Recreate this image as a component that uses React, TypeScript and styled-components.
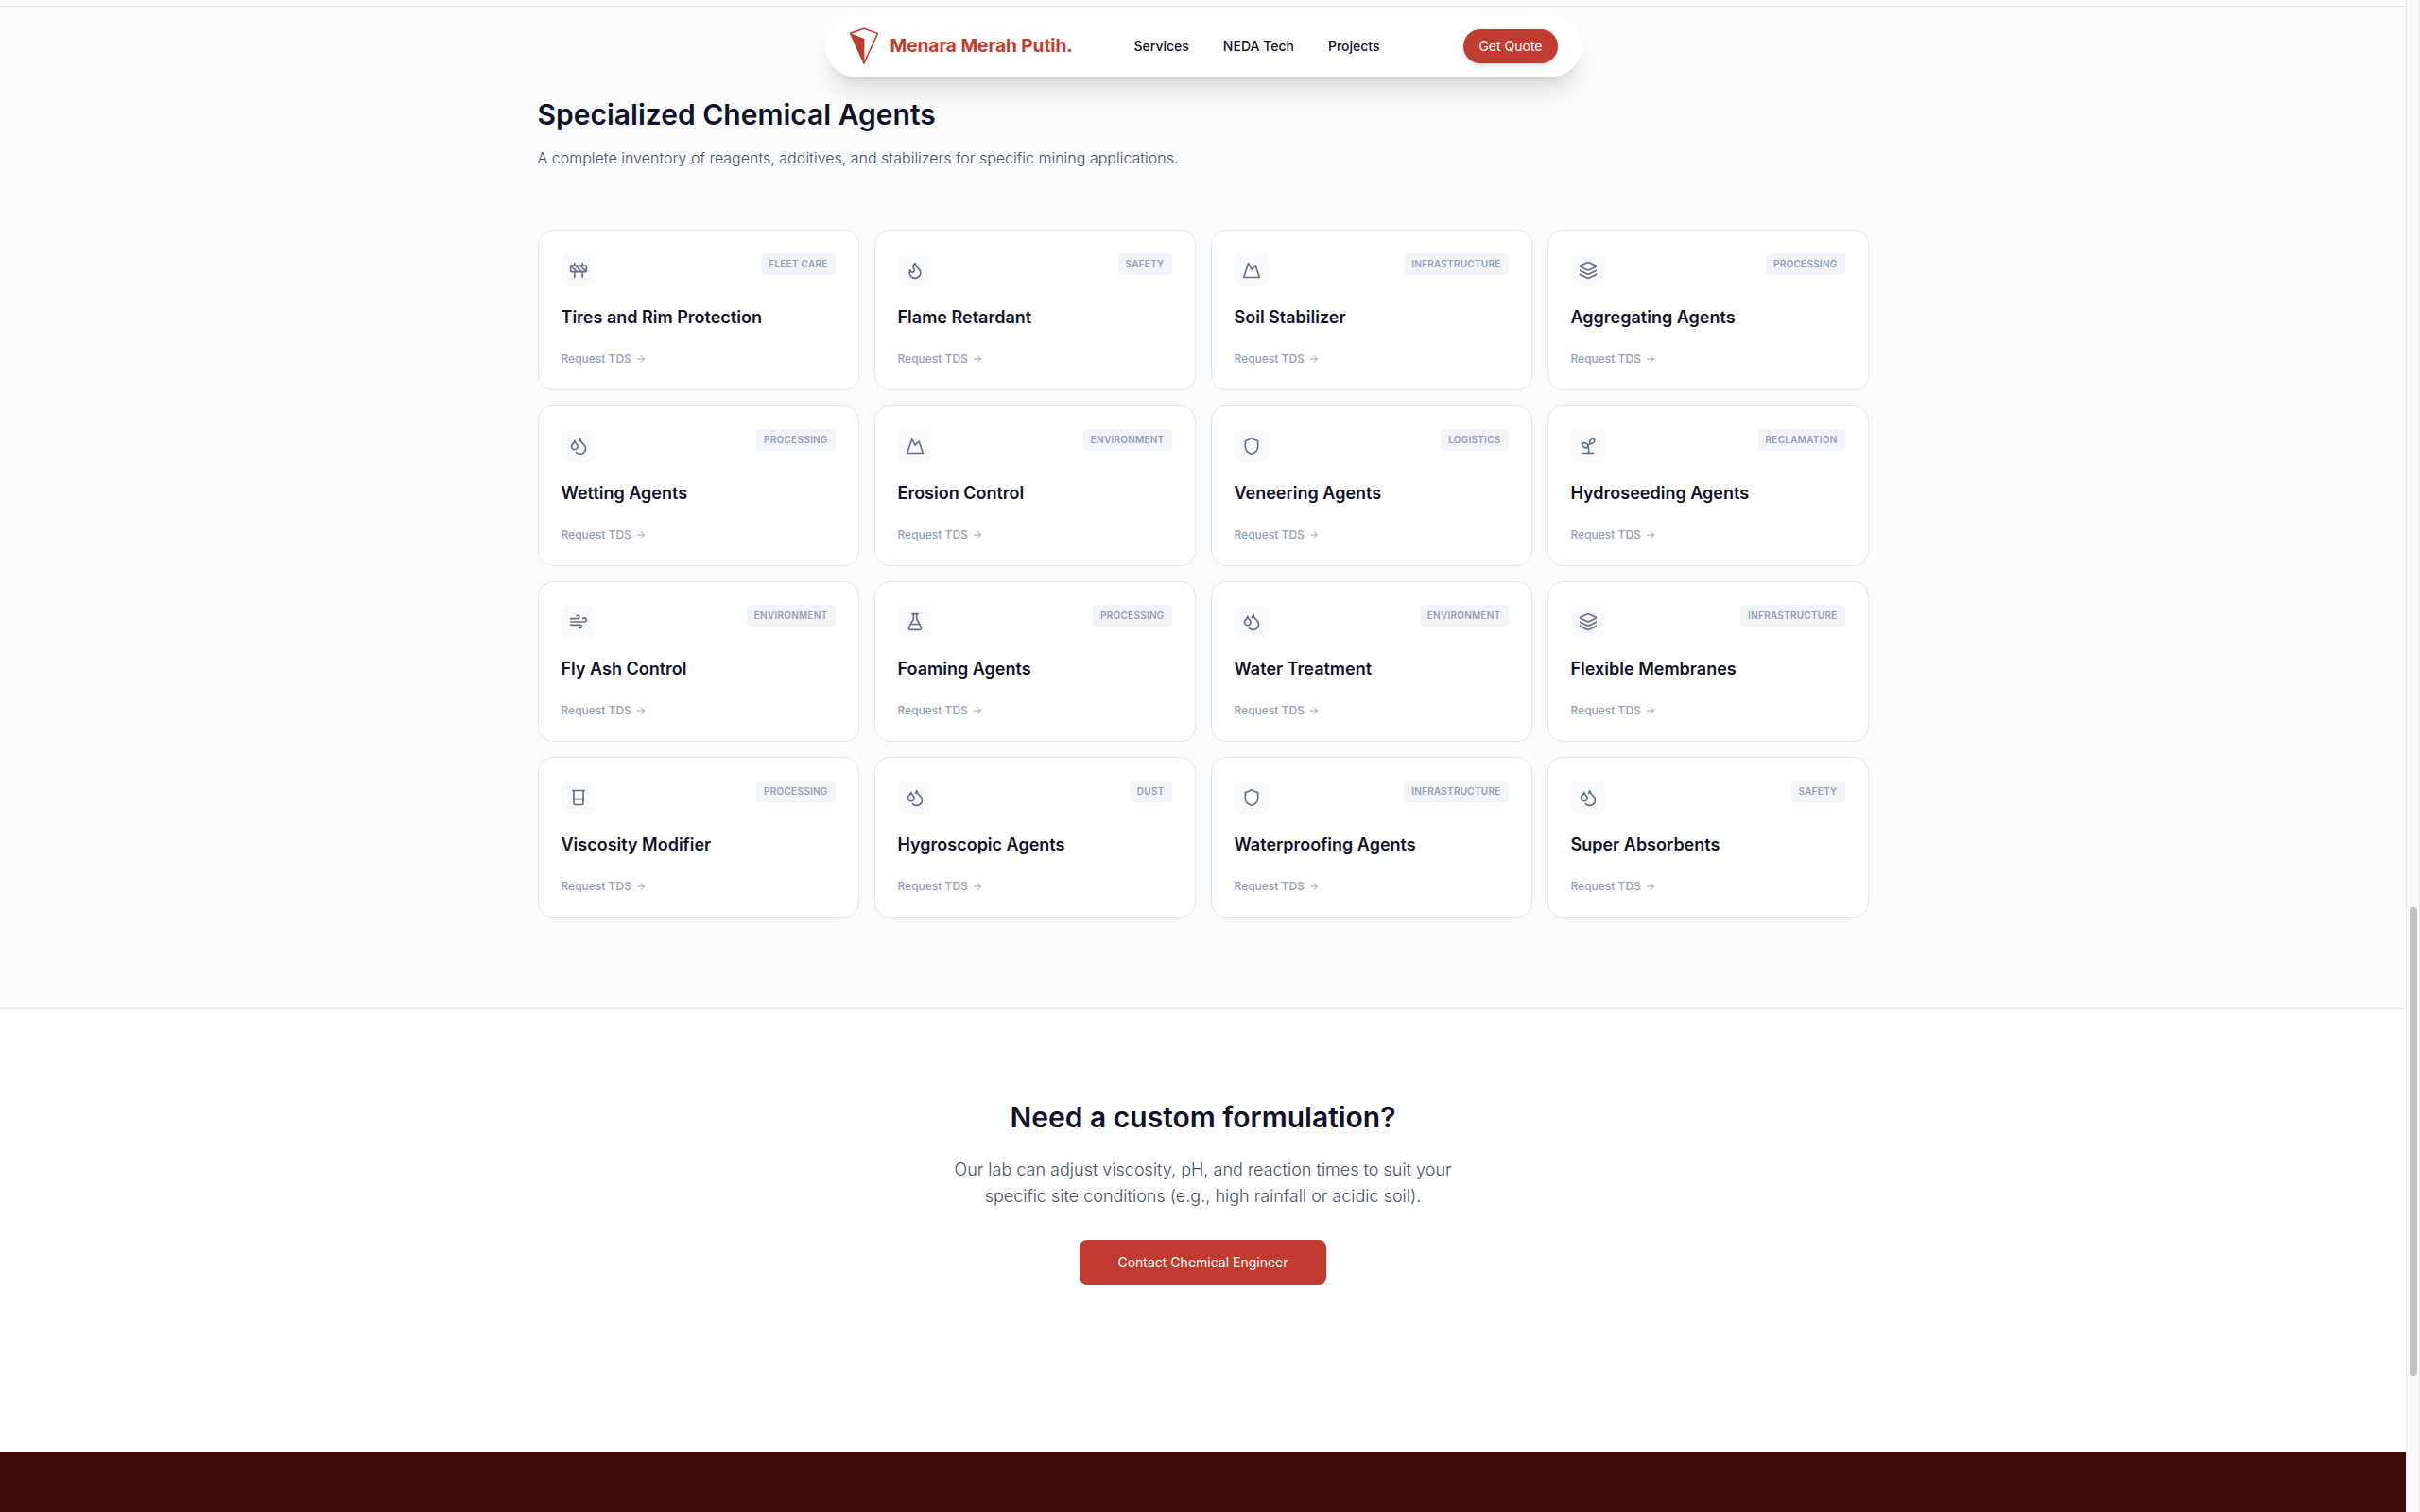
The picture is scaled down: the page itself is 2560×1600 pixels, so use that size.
import React from "react";
import styled, { createGlobalStyle } from "styled-components";
import {
  ArrowRight,
  Beaker,
  Construction,
  Droplets,
  Flame,
  FlaskConical,
  Layers,
  Mountain,
  Shield,
  Sprout,
  Wind,
  type LucideIcon,
} from "lucide-react";

const color = {
  brand: "#c03c30",
  ink: "#0f1229",
  body: "#475069",
  icon: "#64708b",
  muted: "#94a0b8",
  line: "#e2e8ee",
  tint: "#f1f5f9",
  wash: "#fafbfd",
  soft: "#f8fafc",
  footer: "#3f0e0e",
};

const GlobalStyle = createGlobalStyle`
  *, *::before, *::after { box-sizing: border-box; }
  body {
    margin: 0;
    background: #fff;
    color: ${color.ink};
    font-family: Inter, "Liberation Sans", sans-serif;
    font-size: 16px;
    line-height: 24px;
    -webkit-font-smoothing: antialiased;
  }
  h1, h2, h3, p, ul { margin: 0; padding: 0; }
  a { color: inherit; text-decoration: none; }
`;

const Shell = styled.div`
  display: grid;
  grid-template-columns: minmax(0, 1fr) 15px;
  min-height: 100vh;
`;

const Page = styled.div`
  position: relative;
  display: flex;
  flex-direction: column;
`;

const ScrollTrack = styled.div`
  display: grid;
  grid-template-rows: 60fr 31fr 9fr;
  padding: 0 2px 0 3px;
  background: #fafafa;
  border: solid #e8e8e8;
  border-width: 0 1px;
`;

const ScrollThumb = styled.div`
  grid-row: 2;
  border-radius: 4px;
  background: #c1c1c1;
`;

const Header = styled.header`
  position: absolute;
  z-index: 10;
  top: 16px;
  left: 0;
  right: 0;
  display: flex;
  justify-content: center;
`;

const NavBar = styled.nav`
  display: flex;
  align-items: center;
  justify-content: space-between;
  width: 100%;
  max-width: 800px;
  height: 66px;
  padding: 0 24px;
  border: 1px solid #fff;
  border-radius: 33px;
  background: #fff;
  box-shadow: 0 20px 25px -5px rgba(0, 0, 0, 0.1), 0 8px 10px -6px rgba(0, 0, 0, 0.1);
`;

const Brand = styled.a`
  display: flex;
  align-items: center;
  gap: 12px;
  color: ${color.brand};
  font-size: 19px;
  font-weight: 700;
  line-height: 28px;
`;

const Menu = styled.ul`
  display: flex;
  gap: 36px;
  margin-right: 24px;
  list-style: none;
  font-size: 14px;
  font-weight: 500;
  line-height: 20px;
`;

const QuoteButton = styled.button`
  height: 36px;
  padding: 0 16px;
  border: 0;
  border-radius: 18px;
  background: ${color.brand};
  color: #fff;
  font: 400 14px/20px Inter, "Liberation Sans", sans-serif;
  box-shadow: 0 4px 6px -1px rgba(0, 0, 0, 0.1), 0 2px 4px -2px rgba(0, 0, 0, 0.1);
`;

const Catalog = styled.section`
  margin-top: 6px;
  padding: 96px 32px;
  border: solid ${color.line};
  border-width: 1px 0;
  background: ${color.wash};
`;

const Container = styled.div`
  max-width: 1408px;
  margin: 0 auto;
`;

const Heading = styled.h2`
  font-size: 30px;
  font-weight: 600;
  line-height: 36px;
`;

const Lead = styled.p`
  margin-top: 16px;
  color: ${color.body};
  font-weight: 300;
`;

const CardGrid = styled.div`
  display: grid;
  grid-template-columns: repeat(auto-fill, minmax(300px, 1fr));
  gap: 16px;
  margin-top: 64px;
`;

const Card = styled.article`
  display: flex;
  flex-direction: column;
  padding: 24px;
  border: 1px solid ${color.line};
  border-radius: 16px;
  background: #fff;
`;

const CardTop = styled.div`
  display: flex;
  align-items: flex-start;
  justify-content: space-between;
`;

const IconBox = styled.div`
  display: flex;
  padding: 8px;
  border-radius: 8px;
  background: ${color.soft};
  color: ${color.icon};
`;

const Tag = styled.span`
  padding: 4px 8px;
  border-radius: 4px;
  background: ${color.tint};
  color: ${color.muted};
  font-size: 10px;
  font-weight: 600;
  line-height: 15px;
  letter-spacing: 0.025em;
  text-transform: uppercase;
`;

const CardTitle = styled.h3`
  margin-top: 18px;
  font-size: 18px;
  font-weight: 600;
  line-height: 28px;
`;

const RequestLink = styled.a`
  display: flex;
  align-items: center;
  align-self: flex-start;
  gap: 4px;
  margin-top: 22px;
  color: ${color.muted};
  font-size: 12px;
  font-weight: 500;
  line-height: 16px;
`;

const Custom = styled.section`
  display: flex;
  flex-direction: column;
  align-items: center;
  padding: 96px 32px;
  margin-bottom: 80px;
  text-align: center;
`;

const CustomText = styled.p`
  max-width: 560px;
  margin-top: 24px;
  color: ${color.body};
  font-size: 18px;
  font-weight: 300;
  line-height: 28px;
`;

const ContactButton = styled.button`
  height: 48px;
  margin-top: 32px;
  padding: 0 40px;
  border: 0;
  border-radius: 8px;
  background: ${color.brand};
  color: #fff;
  font: 400 14px/20px Inter, "Liberation Sans", sans-serif;
`;

const Footer = styled.footer`
  flex: 1;
  min-height: 64px;
  background: ${color.footer};
`;

const LogoMark = () => (
  <svg width="32" height="40" viewBox="0 0 32 40" fill="none" aria-hidden="true">
    <path
      d="M1.5 6 16 1.2 30.5 6.4 16 38Z"
      stroke={color.brand}
      strokeWidth="1.5"
      strokeLinejoin="round"
    />
    <path d="M1 6 16.4 12V39Z" fill={color.brand} />
  </svg>
);

type Agent = { name: string; tag: string; icon: LucideIcon };

const agents: Agent[] = [
  { name: "Tires and Rim Protection", tag: "Fleet Care", icon: Construction },
  { name: "Flame Retardant", tag: "Safety", icon: Flame },
  { name: "Soil Stabilizer", tag: "Infrastructure", icon: Mountain },
  { name: "Aggregating Agents", tag: "Processing", icon: Layers },
  { name: "Wetting Agents", tag: "Processing", icon: Droplets },
  { name: "Erosion Control", tag: "Environment", icon: Mountain },
  { name: "Veneering Agents", tag: "Logistics", icon: Shield },
  { name: "Hydroseeding Agents", tag: "Reclamation", icon: Sprout },
  { name: "Fly Ash Control", tag: "Environment", icon: Wind },
  { name: "Foaming Agents", tag: "Processing", icon: FlaskConical },
  { name: "Water Treatment", tag: "Environment", icon: Droplets },
  { name: "Flexible Membranes", tag: "Infrastructure", icon: Layers },
  { name: "Viscosity Modifier", tag: "Processing", icon: Beaker },
  { name: "Hygroscopic Agents", tag: "Dust", icon: Droplets },
  { name: "Waterproofing Agents", tag: "Infrastructure", icon: Shield },
  { name: "Super Absorbents", tag: "Safety", icon: Droplets },
];

const AgentCard = ({ name, tag, icon: Icon }: Agent) => (
  <Card>
    <CardTop>
      <IconBox>
        <Icon size={20} strokeWidth={2} />
      </IconBox>
      <Tag>{tag}</Tag>
    </CardTop>
    <CardTitle>{name}</CardTitle>
    <RequestLink href="#contact">
      Request TDS <ArrowRight size={12} />
    </RequestLink>
  </Card>
);

export default function App() {
  return (
    <>
      <GlobalStyle />
      <Shell>
        <Page>
          <Header>
            <NavBar>
              <Brand href="#top">
                <LogoMark />
                Menara Merah Putih.
              </Brand>
              <Menu>
                <li><a href="#services">Services</a></li>
                <li><a href="#neda">NEDA Tech</a></li>
                <li><a href="#projects">Projects</a></li>
              </Menu>
              <QuoteButton type="button">Get Quote</QuoteButton>
            </NavBar>
          </Header>
          <Catalog>
            <Container>
              <Heading>Specialized Chemical Agents</Heading>
              <Lead>
                A complete inventory of reagents, additives, and stabilizers for specific mining
                applications.
              </Lead>
              <CardGrid>
                {agents.map((agent) => (
                  <AgentCard key={agent.name} {...agent} />
                ))}
              </CardGrid>
            </Container>
          </Catalog>
          <Custom id="contact">
            <Heading>Need a custom formulation?</Heading>
            <CustomText>
              Our lab can adjust viscosity, pH, and reaction times to suit your specific site
              conditions (e.g., high rainfall or acidic soil).
            </CustomText>
            <ContactButton type="button">Contact Chemical Engineer</ContactButton>
          </Custom>
          <Footer />
        </Page>
        <ScrollTrack>
          <ScrollThumb />
        </ScrollTrack>
      </Shell>
    </>
  );
}
